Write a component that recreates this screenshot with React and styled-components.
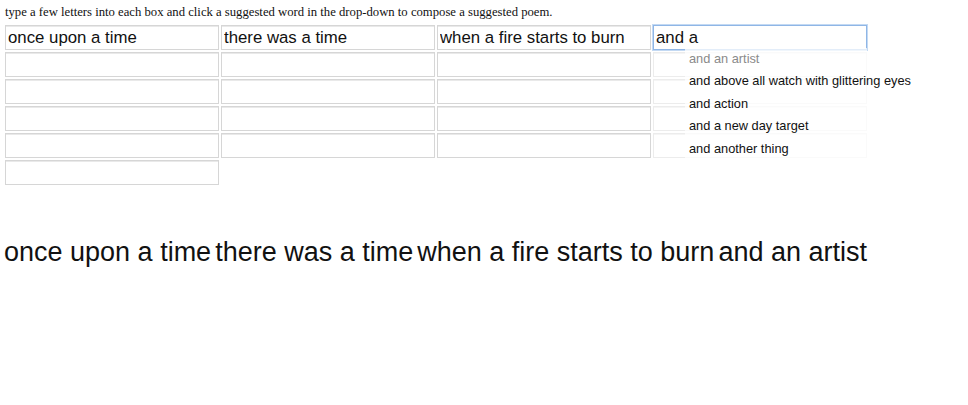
import React, { useState } from 'react'
import styled, { createGlobalStyle } from 'styled-components'

const Global = createGlobalStyle`
    body {
        margin: 0;
        background: #fff;
    }
`

const Page = styled.div`
    padding: 5px 0 0 5px;
`

const Hint = styled.p`
    margin: 0 0 5px;
    font-family: 'Liberation Serif', serif;
    font-size: 12.7px;
    line-height: 15px;
    color: #111;
`

const Grid = styled.div`
    position: relative;
    display: flex;
    flex-wrap: wrap;
    width: 864px;
    gap: 2px;
`

const Box = styled.input`
    box-sizing: border-box;
    width: 214px;
    height: 25px;
    margin: 0;
    padding: 1px 2px 0;
    border: 1px solid ${p => (p.$active ? '#8fb6e6' : '#d6d6d6')};
    box-shadow: ${p => (p.$active ? '0 0 0 1px #c3d9f3' : 'inset 0 1px 0 #e9e9e9')};
    border-radius: 0;
    outline: none;
    font-family: 'Liberation Sans', Arial, sans-serif;
    font-size: 16.8px;
    color: #111;
    caret-color: #000;
    opacity: ${p => (p.$faded ? 0.45 : 1)};
`

const Drop = styled.ul`
    position: absolute;
    left: 680px;
    top: 23px;
    width: 182px;
    margin: 0;
    padding: 0;
    list-style: none;
    background: rgba(255, 255, 255, 0.75);
`

const Item = styled.li`
    height: 22.4px;
    line-height: 22.4px;
    padding-left: 4px;
    white-space: nowrap;
    font-family: 'Liberation Sans', Arial, sans-serif;
    font-size: 12.8px;
    color: ${p => (p.$hint ? '#8a8a8a' : '#111')};
`

const Poem = styled.div`
    margin-top: 52px;
    margin-left: -1px;
    font-family: 'Liberation Sans', Arial, sans-serif;
    font-size: 27px;
    color: #111;
`

const Line = styled.span`
    margin-right: 4px;
`

const start = ['once upon a time', 'there was a time', 'when a fire starts to burn', 'and a']
const suggestions = [
    'and an artist',
    'and above all watch with glittering eyes',
    'and action',
    'and a new day target',
    'and another thing',
]

export default function App() {
    const [values, setValues] = useState(() => {
        const v = Array(21).fill('')
        start.forEach((s, i) => (v[i] = s))
        return v
    })

    const poem = [...values.slice(0, 3), suggestions[0]]

    return (
        <Page>
            <Global />
            <Hint>
                type a few letters into each box and click a suggested word in the drop-down to compose a suggested poem.
            </Hint>
            <Grid>
                {values.map((val, i) => (
                    <Box
                        key={i}
                        value={val}
                        $active={i === 3}
                        $faded={i > 3 && i % 4 === 3}
                        autoFocus={i === 3}
                        onChange={e => {
                            const next = [...values]
                            next[i] = e.target.value
                            setValues(next)
                        }}
                    />
                ))}
                <Drop>
                    {suggestions.map((s, i) => (
                        <Item key={s} $hint={i === 0}>{s}</Item>
                    ))}
                </Drop>
            </Grid>
            <Poem>
                {poem.map((p, i) => (
                    <Line key={i}>{p}</Line>
                ))}
            </Poem>
        </Page>
    )
}
